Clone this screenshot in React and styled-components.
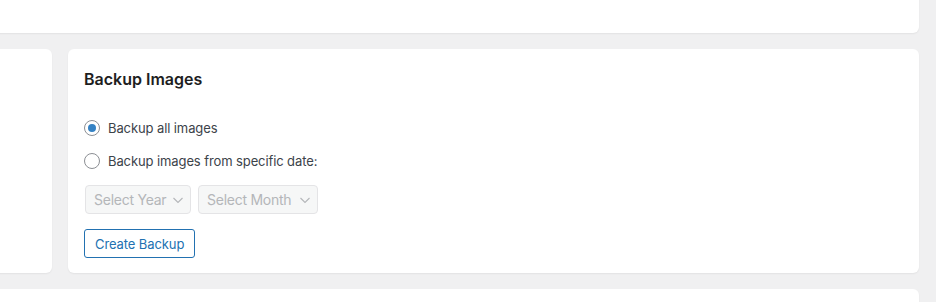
import { useState } from "react";
import styled, { createGlobalStyle } from "styled-components";

const GlobalStyle = createGlobalStyle`
  html, body {
    margin: 0;
    padding: 0;
    background: #f0f0f1;
    overflow: hidden;
  }
  body {
    font-family: Inter, "Open Sans", "Liberation Sans", sans-serif;
    color: #3c434a;
  }
`;

const years = ["2024", "2023", "2022"];
const months = ["January", "February", "March"];

export default function App() {
  const [mode, setMode] = useState("all");

  return (
    <>
      <GlobalStyle />
      <Page>
        <TopCard />
        <Row>
          <Card />
          <Card>
            <Title>Backup Images</Title>
            <Options>
              <Option>
                <Radio
                  type="radio"
                  name="backup"
                  checked={mode === "all"}
                  onChange={() => setMode("all")}
                />
                Backup all images
              </Option>
              <Option>
                <Radio
                  type="radio"
                  name="backup"
                  checked={mode === "date"}
                  onChange={() => setMode("date")}
                />
                Backup images from specific date:
              </Option>
            </Options>
            <Selects>
              <Select disabled={mode !== "date"} $width={106}>
                <option>Select Year</option>
                {years.map((y) => (
                  <option key={y}>{y}</option>
                ))}
              </Select>
              <Select disabled={mode !== "date"} $width={120}>
                <option>Select Month</option>
                {months.map((m) => (
                  <option key={m}>{m}</option>
                ))}
              </Select>
            </Selects>
            <Button>Create Backup</Button>
          </Card>
        </Row>
        <BottomCard />
      </Page>
    </>
  );
}

const Page = styled.div`
  display: flex;
  flex-direction: column;
  gap: 16px;
  margin: -8px 17px 0 -100px;
`;

const Card = styled.div`
  background: #fff;
  border-radius: 6px;
  box-shadow: 0 1px 2px rgba(0, 0, 0, 0.06);
  padding: 18px 16px 15px;
`;

const TopCard = styled(Card)`
  height: 41px;
  padding: 0;
  box-sizing: border-box;
`;

const BottomCard = styled(Card)`
  height: 60px;
`;

const Row = styled.div`
  display: grid;
  grid-template-columns: 152px 1fr;
  gap: 16px;
`;

const Title = styled.h2`
  margin: 0 0 25px;
  font-size: 16px;
  line-height: 24px;
  font-weight: 600;
  color: #1e1e1e;
`;

const Options = styled.div`
  display: flex;
  flex-direction: column;
  gap: 9px;
`;

const Option = styled.label`
  display: flex;
  align-items: center;
  gap: 8px;
  height: 24px;
  font-size: 13px;
  letter-spacing: -0.1px;
  color: #3c434a;
  cursor: pointer;
`;

const Radio = styled.input`
  appearance: none;
  margin: 0;
  width: 16px;
  height: 16px;
  border: 1px solid #8c8f94;
  border-radius: 50%;
  background: #fff;
  display: grid;
  place-items: center;
  box-sizing: border-box;
  cursor: pointer;

  &:checked::before {
    content: "";
    width: 8px;
    height: 8px;
    border-radius: 50%;
    background: #3582c4;
  }
`;

const Selects = styled.div`
  display: flex;
  gap: 7px;
  margin: 12px 0 15px 1px;
`;

const chevron = encodeURIComponent(
  '<svg xmlns="http://www.w3.org/2000/svg" width="12" height="12" viewBox="0 0 12 12"><path d="M1.5 4l4.5 4.5 4.5-4.5" fill="none" stroke="#b4b6b9" stroke-width="1.1"/></svg>'
);

const Select = styled.select`
  appearance: none;
  width: ${(p) => p.$width}px;
  height: 29px;
  padding: 0 18px 0 8px;
  font-family: inherit;
  font-size: 14px;
  letter-spacing: -0.25px;
  color: #b4b6b9;
  background: #f6f7f7 url("data:image/svg+xml,${chevron}") no-repeat right 6px center;
  border: 1px solid #e4e4e6;
  border-radius: 4px;
  box-sizing: border-box;

  &:disabled {
    opacity: 1;
    color: #b4b6b9;
  }
`;

const Button = styled.button`
  height: 29px;
  padding: 0 10px;
  font-family: inherit;
  font-size: 13px;
  letter-spacing: -0.1px;
  color: #2271b1;
  background: #fff;
  border: 1px solid #2271b1;
  border-radius: 3px;
  cursor: pointer;
`;
